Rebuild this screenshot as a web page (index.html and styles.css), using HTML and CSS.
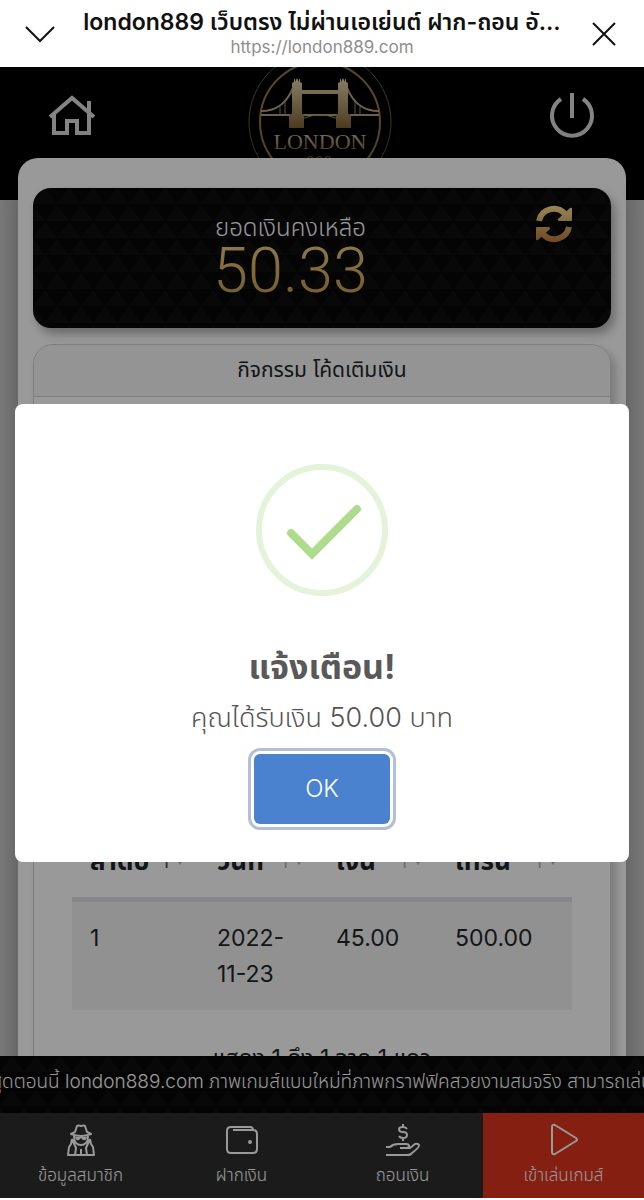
FILE: index.html
```html
<!DOCTYPE html>
<html lang="th">
  <head>
    <meta charset="UTF-8" />
    <meta name="viewport" content="width=device-width, initial-scale=1.0" />
    <title>london889</title>
    <link rel="stylesheet" href="styles.css">
  </head>
  <body>
    <!-- Browser bar -->
    <div class="browser-bar">
      <button class="bar-btn" type="button" aria-label="Minimize">
        <svg width="32" height="32" viewBox="0 0 32 32"><path d="M2 9l14 14L30 9" /></svg>
      </button>
      <div class="bar-text">
        <div class="bar-title">london889 เว็บตรง ไม่ผ่านเอเย่นต์ ฝาก-ถอน อั...</div>
        <div class="bar-url">https://london889.com</div>
      </div>
      <button class="bar-btn" type="button" aria-label="Close">
        <svg width="32" height="32" viewBox="0 0 32 32"><path d="M5 5l22 22M27 5L5 27" /></svg>
      </button>
    </div>

    <div class="app">
      <div class="page">
        <header class="header">
          <a class="header-link" href="#" aria-label="Home">
            <svg width="48" height="44" viewBox="0 0 48 44">
              <path d="M2 23L24 4l22 19M6 20v19h13V27h10v12h12V19M41 18V7" />
            </svg>
          </a>
          <svg class="logo" width="148" height="98" viewBox="248 67 148 98">
            <defs>
              <linearGradient id="gold" x1="0" y1="0" x2="0" y2="1">
                <stop offset="0" stop-color="#e3d3aa" />
                <stop offset="1" stop-color="#806338" />
              </linearGradient>
            </defs>
            <g fill="none" stroke="#6d5a34">
              <circle cx="320" cy="122" r="71" />
              <circle cx="320" cy="122" r="60" stroke="#937844" stroke-width="2" />
              <path d="M261 111c17 0 26-9 32-23M379 111c-17 0-26-9-32-23" stroke="#b5a47e" stroke-width="2" />
              <path d="M261 115h118" stroke="#b5a47e" stroke-width="2" />
              <path d="M304 118q16-6 32 0M280 107v8M285 101v14M360 107v8M355 101v14" stroke="#a38c5b" />
            </g>
            <path fill="url(#gold)" d="M292 83l2-1v-3h1v3l2-4 2 4v-3h1v3l2 1v7h36v-7l2-1v-3h1v3l2-4 2 4v-3h1v3l2 1v31h3v14h-15v-14h2V94h-36v20h2v14h-15v-14h3z" />
            <text class="logo-text" x="320" y="149" text-anchor="middle" fill="url(#gold)">LONDON</text>
            <text class="logo-num" x="320" y="166" text-anchor="middle">889</text>
          </svg>
          <a class="header-link" href="#" aria-label="Log out">
            <svg width="48" height="48" viewBox="0 0 48 48">
              <path d="M24 1v25M13 7a20 20 0 1 0 22 0" />
            </svg>
          </a>
        </header>

        <main class="panel">
          <section class="balance">
            <div class="balance-info">
              <div class="balance-label">ยอดเงินคงเหลือ</div>
              <div class="balance-amount">50.33</div>
            </div>
            <button class="refresh" type="button" aria-label="Refresh">
              <svg width="38" height="38" viewBox="0 0 38 38">
                <defs>
                  <linearGradient id="refreshGold" gradientUnits="userSpaceOnUse" x1="0" y1="0" x2="0" y2="38">
                    <stop offset="0" stop-color="#fbe391" />
                    <stop offset="1" stop-color="#b5783c" />
                  </linearGradient>
                </defs>
                <path d="M4 16A15 15 0 0 1 30 9M34 22A15 15 0 0 1 8 29" fill="none" stroke="url(#refreshGold)" stroke-width="6" />
                <path d="M35 3q2-1 2 1v11q0 1-1 1H24q-2-1-1-2zM3 35q-2 1-2-1V23q0-1 1-1h12q2 1 1 2z" fill="url(#refreshGold)" />
              </svg>
            </button>
          </section>

          <section class="card">
            <h2 class="card-title">กิจกรรม โค้ดเติมเงิน</h2>
            <div class="card-body">
              <table class="history">
                <thead>
                  <tr>
                    <th class="col-no"><span class="th-inner">ลำดับ <span class="sort sort-asc">↑<i></i></span></span></th>
                    <th class="col-date"><span class="th-inner">วันที่ <span class="sort">↑<i></i></span></span></th>
                    <th class="col-money"><span class="th-inner">เงิน <span class="sort">↑<i></i></span></span></th>
                    <th><span class="th-inner">เทิร์น <span class="sort">↑<i></i></span></span></th>
                  </tr>
                </thead>
                <tbody>
                  <tr>
                    <td>1</td>
                    <td>2022-11-23</td>
                    <td>45.00</td>
                    <td>500.00</td>
                  </tr>
                </tbody>
              </table>
              <p class="history-info">แสดง 1 ถึง 1 จาก 1 แถว</p>
            </div>
          </section>
        </main>
      </div>

      <!-- Announcement and bottom menu -->
      <div class="news">
        <span>สุดตอนนี้ london889.com ภาพเกมส์แบบใหม่ที่ภาพกราฟฟิคสวยงามสมจริง สามารถเล่น</span>
      </div>
      <nav class="menu">
        <a class="menu-item" href="#">
          <svg width="28" height="34" viewBox="0 0 28 34">
            <path d="M4 11l4-2 2-6q1-1 4 0 3-1 4 0l2 6 4 2q-10 4-20 0zM7 13c0 6 3 9 7 9s7-3 7-9M5 16l-1 5-2 3-1 8h26l-1-8-2-3-1-5M5 16l4 9-1 7M23 16l-4 9 1 7M14 26v6" />
            <path class="shades" d="M8 14h12q-1 4-4 3l-2-2-2 2q-3 1-4-3z" />
          </svg>
          <span>ข้อมูลสมาชิก</span>
        </a>
        <a class="menu-item" href="#">
          <svg width="32" height="34" viewBox="0 0 32 34">
            <path d="M7 7h20q4 0 4 4v15q0 4-4 4H5q-4 0-4-4V8q0-4 4-4h19q3 0 3 3" />
            <circle cx="24" cy="19" r="1" />
          </svg>
          <span>ฝากเงิน</span>
        </a>
        <a class="menu-item" href="#">
          <svg width="36" height="34" viewBox="0 0 36 34">
            <path d="M22 6q-1-2-4-2-4 0-4 2 0 3 4 3t4 3-4 3q-3 0-4-2M18 1v3M18 15v3M1 24h4q3-3 8-3h8q3 0 3 2t-3 2h-6M22 25h3l5-4q3-1 4 1 1 2-7 8-1 2-5 2H1" />
          </svg>
          <span>ถอนเงิน</span>
        </a>
        <a class="menu-item menu-play" href="#">
          <svg width="32" height="34" viewBox="0 0 32 34">
            <path d="M4 4q0-3 3-2l21 13q2 2 0 3L7 31q-3 1-3-2z" />
          </svg>
          <span>เข้าเล่นเกมส์</span>
        </a>
      </nav>

      <!-- Alert dialog -->
      <div class="overlay">
        <div class="modal" role="dialog" aria-labelledby="modalTitle">
          <svg class="modal-icon" width="132" height="132" viewBox="0 0 132 132">
            <circle cx="66" cy="66" r="63" fill="none" stroke="#e4f3da" stroke-width="6" />
            <path d="M35 69l21 21 45-45" fill="none" stroke="#afdb8d" stroke-width="8" stroke-linecap="round" />
          </svg>
          <h1 class="modal-title" id="modalTitle">แจ้งเตือน!</h1>
          <p class="modal-text">คุณได้รับเงิน 50.00 บาท</p>
          <button class="modal-ok" type="button">OK</button>
        </div>
      </div>
    </div>
  </body>
</html>
```

FILE: styles.css
```css
* {
  box-sizing: border-box;
}
body {
  margin: 0;
  height: 100vh;
  padding-bottom: 2px;
  display: flex;
  flex-direction: column;
  background: #fff;
  font-family: Inter, "Noto Sans Thai", "Noto Sans", sans-serif;
  overflow: hidden;
}
button {
  border: none;
  background: none;
  padding: 0;
  font-family: inherit;
  cursor: pointer;
}
svg {
  display: block;
}

/* Browser bar */
.browser-bar {
  display: flex;
  align-items: center;
  height: 67px;
  padding: 0 24px;
  gap: 24px;
}
.bar-btn svg {
  fill: none;
  stroke: #111;
  stroke-width: 2;
}
.bar-text {
  flex: 1;
  min-width: 0;
  padding-bottom: 4px;
  text-align: center;
}
.bar-title {
  font-size: 23px;
  font-weight: 600;
  line-height: 30px;
  color: #111;
  white-space: nowrap;
  overflow: hidden;
}
.bar-url {
  font-size: 17px;
  line-height: 20px;
  color: #8e8e8e;
}

.app {
  position: relative;
  flex: 1;
  min-height: 0;
  display: flex;
  flex-direction: column;
}
.page {
  flex: 1;
  min-height: 0;
  overflow: hidden;
  background: #d8d8d8;
}

/* Header */
.header {
  display: flex;
  justify-content: space-between;
  align-items: center;
  height: 133px;
  padding: 0 48px 35px;
  background: #000;
}
.header-link svg {
  fill: none;
  stroke: #dcdcdc;
  stroke-width: 4;
}
.logo-text {
  font-family: "Liberation Serif", serif;
  font-size: 22px;
}
.logo-num {
  font-family: "Liberation Serif", serif;
  font-size: 14px;
  letter-spacing: 2px;
  fill: #937844;
}

/* Content */
.panel {
  position: relative;
  margin: -42px 18px 0;
  padding: 30px 15px 0;
  border-radius: 20px 20px 0 0;
  background: #fff;
  box-shadow: 0 8px 40px rgba(0, 0, 0, 0.4);
}
.balance,
.news {
  background: #070707 url("data:image/svg+xml,%3Csvg xmlns='http://www.w3.org/2000/svg' width='24' height='34'%3E%3Cpath d='M0 16L12 0l12 16zM-12 33L0 17l12 16zM12 33l12-16 12 16z' fill='%230e0e0e'/%3E%3C/svg%3E");
}
.balance {
  display: flex;
  align-items: flex-start;
  height: 140px;
  padding: 17px 38px 0 13px;
  border-radius: 18px;
  box-shadow: 4px 6px 10px rgba(0, 0, 0, 0.3);
}
.balance-info {
  flex: 1;
  padding-top: 7px;
  text-align: center;
}
.balance-label {
  font-size: 24px;
  font-weight: 300;
  line-height: 32px;
  color: #fff;
}
.balance-amount {
  font-family: Roboto, sans-serif;
  font-size: 63px;
  font-weight: 300;
  line-height: 54px;
  color: transparent;
  background: linear-gradient(to bottom, #e9c979, #c39a4b);
  -webkit-background-clip: text;
  background-clip: text;
}
.card {
  margin-top: 16px;
  border: 1px solid #d2d2d2;
  border-radius: 20px 20px 0 0;
  box-shadow: 5px 5px 8px rgba(0, 0, 0, 0.2);
}
.card-title {
  margin: 0;
  padding: 9px 10px 11px;
  border-bottom: 1px solid #d2d2d2;
  border-radius: 20px 20px 0 0;
  background: #f7f7f7;
  font-size: 21px;
  font-weight: 400;
  line-height: 31px;
  text-align: center;
  color: #212529;
}
.card-body {
  padding: 428px 38px 0;
}
.history {
  width: 100%;
  table-layout: fixed;
  border-collapse: collapse;
  font-size: 23px;
  line-height: 36px;
  color: #212529;
}
.history th,
.history td {
  padding: 18px 14px 18px 18px;
  text-align: left;
  vertical-align: top;
}
.history th {
  font-size: 26px;
}
.history thead tr {
  border-bottom: 5px solid #dee2e6;
}
.history tbody tr {
  background: #f2f2f2;
}
.col-no {
  width: 127px;
}
.col-date,
.col-money {
  width: 119px;
}
.th-inner {
  display: flex;
  justify-content: space-between;
}
.sort {
  display: flex;
  align-items: center;
  font-size: 20px;
  font-weight: 400;
  color: #b4b4b4;
}
.sort i {
  border: 5px solid transparent;
  border-top: 8px solid #b4b4b4;
  border-bottom: 0;
}
.sort-asc {
  color: #444;
}
.history-info {
  margin: 30px 0;
  font-size: 23px;
  line-height: 36px;
  text-align: center;
  color: #212529;
}

/* Announcement */
.news {
  display: flex;
  justify-content: center;
  height: 57px;
  padding-top: 10px;
  overflow: hidden;
  white-space: nowrap;
  font-size: 19px;
  font-weight: 300;
  line-height: 32px;
  color: #fff;
}

/* Bottom menu */
.menu {
  display: grid;
  grid-template-columns: repeat(4, 1fr);
  height: 85px;
}
.menu-item {
  display: flex;
  flex-direction: column;
  align-items: center;
  gap: 6px;
  padding-top: 10px;
  background: #2d2d2f;
  color: #fff;
  font-size: 17px;
  font-weight: 300;
  line-height: 24px;
  text-decoration: none;
  white-space: nowrap;
}
.menu-item svg {
  fill: none;
  stroke: #fff;
  stroke-width: 2;
  stroke-linejoin: round;
}
.menu-item .shades {
  fill: #fff;
  stroke: none;
}
.menu-play {
  background: #dc351e;
}

/* Alert dialog */
.overlay {
  position: absolute;
  inset: 0;
  display: flex;
  align-items: center;
  padding: 0 15px;
  background: rgba(0, 0, 0, 0.4);
}
.modal {
  flex: 1;
  display: flex;
  flex-direction: column;
  align-items: center;
  padding: 60px 20px 38px;
  border-radius: 8px;
  background: #fff;
}
.modal-title {
  margin: 46px 0 0;
  font-size: 34px;
  font-weight: 700;
  line-height: 50px;
  color: #595959;
}
.modal-text {
  margin: 6px 0 16px;
  font-size: 27px;
  font-weight: 300;
  line-height: 40px;
  color: #545454;
}
.modal-ok {
  width: 136px;
  height: 70px;
  border-radius: 6px;
  background: #4a82d0;
  box-shadow: 0 0 0 3px #fff, 0 0 0 6px #b4bfd3;
  font-size: 24px;
  font-weight: 300;
  color: #fff;
}
```
